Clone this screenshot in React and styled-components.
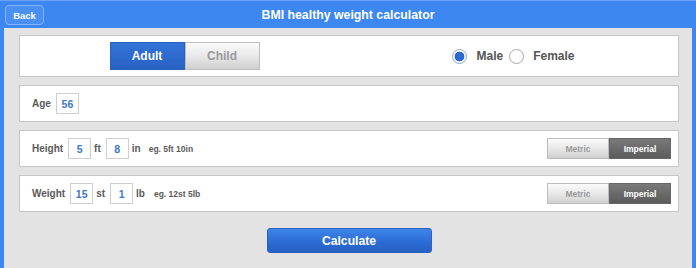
import React from "react";
import styled, { createGlobalStyle } from "styled-components";

const Global = createGlobalStyle`
  html, body { margin: 0; padding: 0; }
  body { font-family: "Liberation Sans", Arial, sans-serif; background: #e4e4e4; }
`;

const Frame = styled.div`
  width: 696px;
  height: 268px;
  box-sizing: border-box;
  background: #3d87f1;
  padding: 0 4px;
  display: flex;
  flex-direction: column;
  overflow: hidden;
  border-top: 1px solid #6aa3f4;
`;

const Header = styled.div`
  height: 27px;
  display: flex;
  align-items: center;
  position: relative;
`;

const BackButton = styled.button`
  position: absolute;
  left: 1px;
  top: 4px;
  width: 39px;
  height: 20px;
  box-sizing: border-box;
  border: 1px solid #82b3f6;
  border-radius: 4px;
  background: #4a90f3;
  color: #fff;
  font-family: "Liberation Sans", Arial, sans-serif;
  font-weight: bold;
  font-size: 9.5px;
  padding: 0;
`;

const Title = styled.h1`
  flex: 1;
  margin: 0;
  text-align: center;
  color: #fff;
  font-size: 12.3px;
  font-weight: bold;
`;

const Body = styled.div`
  flex: 1;
  background: #e3e3e3;
  padding: 7px 13px 0 15px;
  display: flex;
  flex-direction: column;
  gap: 8px;
`;

const Panel = styled.div`
  background: #fff;
  border: 1px solid #c6c6c6;
  box-sizing: border-box;
  height: ${(p) => p.h}px;
  display: flex;
  align-items: center;
  padding: ${(p) => (p.split ? "0" : "0 7px 0 12px")};
`;

const Half = styled.div`
  flex: 1;
  display: flex;
  justify-content: center;
  align-items: center;
`;

const Segmented = styled.div`
  display: flex;
  height: ${(p) => p.h}px;
`;

const Segment = styled.div`
  width: ${(p) => p.w}px;
  box-sizing: border-box;
  display: flex;
  align-items: center;
  justify-content: center;
  font-weight: bold;
  font-size: ${(p) => p.fs}px;
  color: ${(p) => (p.on ? "#fff" : "#9a9a9a")};
  border: 1px solid ${(p) => (p.on ? p.onBorder : "#bdbdbd")};
  background: ${(p) =>
    p.on ? p.onBg : "linear-gradient(#fbfbfb, #e6e6e6 55%, #cfcfcf)"};
`;

const RadioGroup = styled.div`
  display: flex;
  align-items: center;
  font-weight: bold;
  font-size: 12px;
  color: #555;
`;

const RadioCircle = styled.span`
  width: 15px;
  height: 15px;
  box-sizing: border-box;
  border-radius: 50%;
  border: 1px solid ${(p) => (p.checked ? "#8fa6c8" : "#a8a8a8")};
  background: ${(p) =>
    p.checked
      ? "radial-gradient(circle, #2f6fd4 0, #2a66cc 4.6px, #fff 5.2px)"
      : "#fff"};
  margin-right: ${(p) => p.mr}px;
`;

const RadioLabel = styled.span`
  margin-right: ${(p) => p.mr || 0}px;
`;

const Label = styled.span`
  font-size: 10px;
  font-weight: bold;
  color: #5a5a5a;
  margin-right: 5px;
`;

const NumBox = styled.span`
  width: 23px;
  height: 21px;
  box-sizing: border-box;
  border: 1px solid #cfcfcf;
  display: inline-flex;
  align-items: center;
  justify-content: center;
  color: #3b78c8;
  font-weight: bold;
  font-size: 10.5px;
`;

const Unit = styled.span`
  font-size: 10px;
  font-weight: bold;
  color: #5a5a5a;
  margin: 0 ${(p) => p.mr || 5}px 0 3px;
`;

const Hint = styled.span`
  font-size: 8.5px;
  font-weight: bold;
  color: #5a5a5a;
  margin-left: 4px;
`;

const Spacer = styled.div`
  flex: 1;
`;

const CalcRow = styled.div`
  display: flex;
  justify-content: center;
  padding-top: 8px;
`;

const CalcButton = styled.button`
  width: 165px;
  height: 25px;
  border: 1px solid #2a62bd;
  border-radius: 3px;
  background: linear-gradient(#3e86ea, #2b6ad2 60%, #2660c4);
  color: #fff;
  font-family: "Liberation Sans", Arial, sans-serif;
  font-weight: bold;
  font-size: 12.2px;
  padding: 0;
`;

const UnitToggle = () => (
  <Segmented h={21}>
    <Segment w={62} fs={8.5}>Metric</Segment>
    <Segment
      w={62}
      fs={8.5}
      on
      onBorder="#666"
      onBg="linear-gradient(#7a7a7a, #6a6a6a 50%, #5c5c5c)"
    >
      Imperial
    </Segment>
  </Segmented>
);

export default function App() {
  return (
    <>
      <Global />
      <Frame>
        <Header>
          <BackButton>Back</BackButton>
          <Title>BMI healthy weight calculator</Title>
        </Header>
        <Body>
          <Panel h={42} split>
            <Half>
              <Segmented h={28}>
                <Segment
                  w={75}
                  fs={12}
                  on
                  onBorder="#2a62bf"
                  onBg="linear-gradient(#3274d6, #2c69cc 60%, #2962c3)"
                >
                  Adult
                </Segment>
                <Segment w={75} fs={12}>
                  Child
                </Segment>
              </Segmented>
            </Half>
            <Half>
              <RadioGroup>
                <RadioCircle checked mr={9} />
                <RadioLabel mr={6}>Male</RadioLabel>
                <RadioCircle mr={9} />
                <RadioLabel>Female</RadioLabel>
              </RadioGroup>
            </Half>
          </Panel>
          <Panel h={37}>
            <Label>Age</Label>
            <NumBox>56</NumBox>
          </Panel>
          <Panel h={37}>
            <Label>Height</Label>
            <NumBox>5</NumBox>
            <Unit>ft</Unit>
            <NumBox>8</NumBox>
            <Unit mr={4}>in</Unit>
            <Hint>eg. 5ft 10in</Hint>
            <Spacer />
            <UnitToggle />
          </Panel>
          <Panel h={37}>
            <Label>Weight</Label>
            <NumBox>15</NumBox>
            <Unit>st</Unit>
            <NumBox>1</NumBox>
            <Unit mr={0}>lb</Unit>
            <Hint>eg. 12st 5lb</Hint>
            <Spacer />
            <UnitToggle />
          </Panel>
          <CalcRow>
            <CalcButton>Calculate</CalcButton>
          </CalcRow>
        </Body>
      </Frame>
    </>
  );
}
